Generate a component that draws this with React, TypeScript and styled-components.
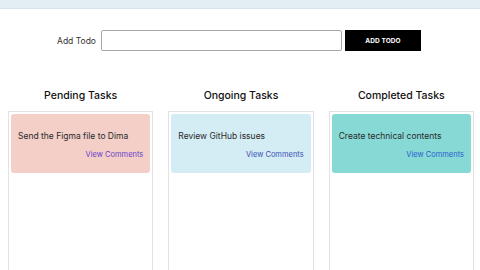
import styled, { createGlobalStyle } from 'styled-components';
import React from 'react';

const GlobalStyle = createGlobalStyle`
  html, body {
    margin: 0;
    padding: 0;
    background: #ffffff;
    font-family: Inter, "Noto Sans", sans-serif;
    color: #1e1e1e;
    overflow: hidden;
  }
`;

type Status = 'pending' | 'ongoing' | 'completed';

const COLUMNS: { status: Status; title: string }[] = [
  { status: 'pending', title: 'Pending Tasks' },
  { status: 'ongoing', title: 'Ongoing Tasks' },
  { status: 'completed', title: 'Completed Tasks' },
];

const TODOS: { id: number; text: string; status: Status }[] = [
  { id: 1, text: 'Send the Figma file to Dima', status: 'pending' },
  { id: 2, text: 'Review GitHub issues', status: 'ongoing' },
  { id: 3, text: 'Create technical contents', status: 'completed' },
];

const CARD_COLORS: Record<Status, { bg: string; link: string }> = {
  pending: { bg: '#f3cfc7', link: '#6a3fc9' },
  ongoing: { bg: '#d4ecf3', link: '#3b4fb8' },
  completed: { bg: '#86d9d5', link: '#2a5fcf' },
};

function App() {
  return (
    <>
      <GlobalStyle />
      <Page>
        <TopBar />
        <Form onSubmit={(e) => e.preventDefault()}>
          <Label htmlFor="todo">Add Todo</Label>
          <Input id="todo" type="text" />
          <Button type="submit">ADD TODO</Button>
        </Form>
        <Board>
          {COLUMNS.map((col) => (
            <Column key={col.status}>
              <ColumnTitle>{col.title}</ColumnTitle>
              <ColumnBody>
                {TODOS.filter((t) => t.status === col.status).map((todo) => (
                  <Card key={todo.id} status={todo.status}>
                    <CardText>{todo.text}</CardText>
                    <CommentLink status={todo.status}>View Comments</CommentLink>
                  </Card>
                ))}
              </ColumnBody>
            </Column>
          ))}
        </Board>
      </Page>
    </>
  );
}

export default App;

const Page = styled.div`
  display: flex;
  flex-direction: column;
  height: 270px;
`;

const TopBar = styled.div`
  height: 8px;
  background: #e2edf4;
  border-bottom: 1px solid #d6e3ec;
`;

const Form = styled.form`
  display: flex;
  align-items: center;
  justify-content: center;
  margin-top: 21px;
  margin-left: -2px;
`;

const Label = styled.label`
  font-size: 8.5px;
  color: #333;
  margin-right: 5px;
`;

const Input = styled.input`
  box-sizing: border-box;
  width: 241px;
  height: 21px;
  border: 1px solid #a8a8a8;
  border-radius: 2px;
  margin: 0 3px 0 0;
  padding: 0 4px;
  font-size: 9px;
`;

const Button = styled.button`
  box-sizing: border-box;
  width: 76px;
  height: 21px;
  background: #000;
  color: #fff;
  border: none;
  font-family: Inter, "Noto Sans", sans-serif;
  font-size: 6.5px;
  font-weight: 700;
  letter-spacing: 0.1px;
`;

const Board = styled.div`
  flex: 1;
  display: grid;
  grid-template-columns: repeat(3, 1fr);
  column-gap: 15px;
  padding: 0 6px 0 8px;
  margin-top: 38px;
`;

const Column = styled.div`
  display: flex;
  flex-direction: column;
`;

const ColumnTitle = styled.h3`
  margin: 0 0 8px;
  font-size: 10.5px;
  font-weight: 500;
  text-align: center;
  line-height: 14px;
  color: #111;
`;

const ColumnBody = styled.div`
  flex: 1;
  border: 1px solid #e2e2e2;
  border-bottom: none;
  padding: 2px;
`;

const Card = styled.div<{ status: Status }>`
  display: flex;
  flex-direction: column;
  row-gap: 8px;
  padding: 17px 7px 13px;
  border-radius: 3px;
  background: ${({ status }) => CARD_COLORS[status].bg};
`;

const CardText = styled.p`
  margin: 0;
  font-size: 8.5px;
  line-height: 11px;
  color: #2a2a2a;
`;

const CommentLink = styled.a<{ status: Status }>`
  align-self: flex-end;
  font-size: 7.5px;
  line-height: 10px;
  color: ${({ status }) => CARD_COLORS[status].link};
  cursor: pointer;
`;
